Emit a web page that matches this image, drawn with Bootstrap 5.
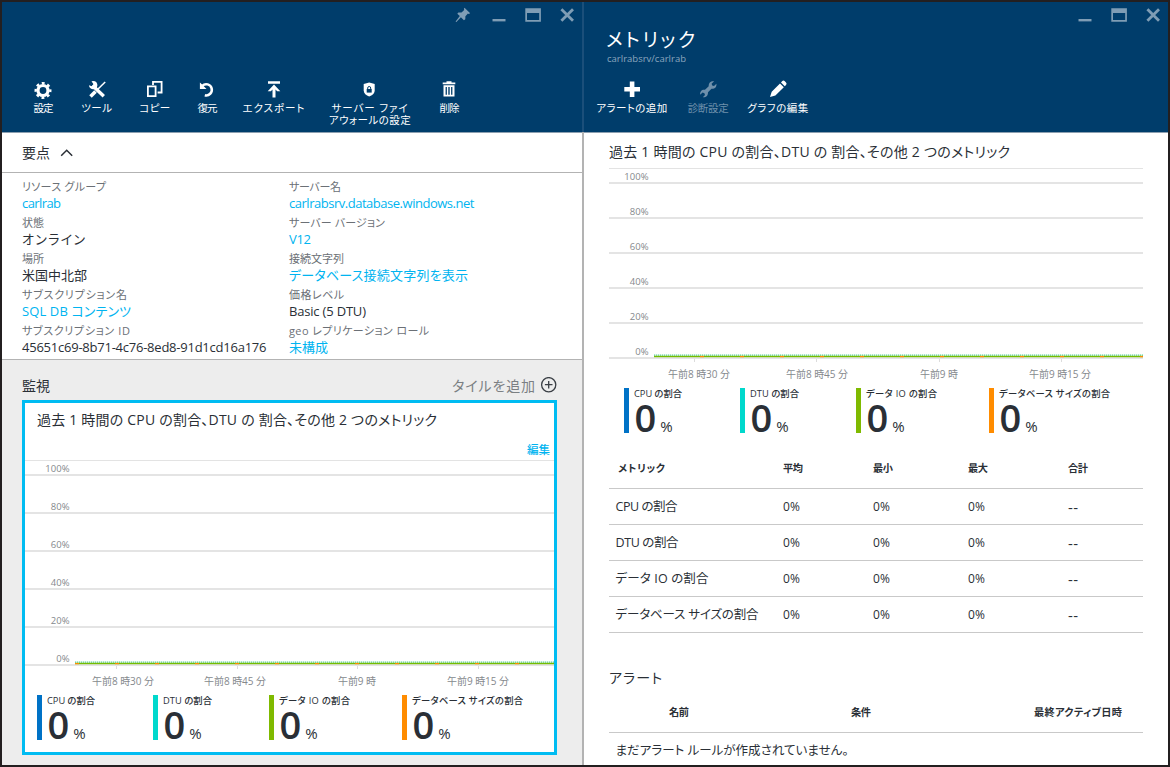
<!DOCTYPE html>
<html lang="ja">
<head>
<meta charset="utf-8">
<title>メトリック</title>
<meta name="viewport" content="width=device-width, initial-scale=1">
<link href="https://cdn.jsdelivr.net/npm/bootstrap@5.3.0/dist/css/bootstrap.min.css" rel="stylesheet">
<style>
  body { font-family: "Open Sans", "Noto Sans CJK JP", sans-serif; font-feature-settings: "palt"; color: #2a2f36; font-size: 12px; background: #231f20; }
  .portal { width: 1170px; height: 767px; border: 2px solid #231f20; background: #fff; }
  .blade-left { width: 580px; }
  .blade-right { width: 584px; }
  .divider { width: 2px; background: linear-gradient(#1b4f7a 130px, #b3b3b3 130px); }
  .blade-head { height: 131px; background: #003d6b; border-bottom: 1px solid #8c9fb0; color: #fff; }
  .controls { height: 26px; color: #7f9db5; padding-right: 7px; }
  .ctl-max { margin-left: 14px; }
  .tools { display: grid; font-size: 10.5px; line-height: 12px; }
  .tools-l { grid-template-columns: 56px 52px 64px 40px 94px 98px 60px; margin-left: 13px; margin-top: 51px; }
  .tools-r { grid-template-columns: 84px 68px 72px; margin-left: 6px; margin-top: 13px; }
  .tool svg { display: block; width: 20px; height: 20px; margin: 0 auto 3px; }
  .off { color: #6f90ab; }
  .blade-name { font-size: 19px; line-height: 24px; padding-left: 22px; }
  .blade-sub { font-size: 9.5px; line-height: 14px; padding-left: 23px; color: #8ba7bf; }
  .ess-head { height: 40px; border-bottom: 1px solid #b3b3b3; padding-left: 20px; font-size: 14px; }
  .ess-body { height: 187px; border-bottom: 1px solid #b3b3b3; padding: 6px 0 0 20px; }
  .ess-col { width: 267px; margin: 0; }
  .ess-col > div { height: 36px; }
  .ess-col dt { font-weight: 400; font-size: 11px; line-height: 16px; color: #6b7076; }
  .ess-col dd { font-size: 13px; line-height: 16px; margin: 0; }
  .azure { color: #00b4f0; }
  .monitor { background: #ededed; padding: 0 25px 0 20px; height: 405px; }
  .monitor-head { height: 40px; padding-top: 11px; font-size: 14px; }
  .add-tile { color: #7b7f83; }
  .tile { height: 355px; border: 3px solid #00bcf2; background: #fff; }
  .tile-title { padding: 8px 0 0 12px; font-size: 14px; line-height: 18px; }
  .tile-edit { font-size: 11.5px; line-height: 14px; margin: 14px 4px 3px 0; font-weight: 500; }
  .chart { display: block; }
  .chart text { fill: #85898d; }
  .legend-row { padding-left: 12px; }
  .tile .legend-row { padding-top: 1px; }
  .legend-wide { padding-left: 15px; }
  .item { height: 45px; border-left: 5px solid; padding-left: 5px; }
  .item-w { width: 116px; } .item-x { width: 133px; }
  .c1 { border-color: #0072c6; } .c2 { border-color: #00d8cc; } .c3 { border-color: #7fba00; } .c4 { border-color: #ff8c00; }
  .item-label { font-size: 9.3px; line-height: 12px; font-weight: 500; }
  .item-num { font-size: 38px; line-height: 34px; font-weight: 600; margin-left: .5px; }
  .item-pct { font-size: 15px; line-height: 15px; margin-left: 4px; }
  .metrics { padding: 0 25px; }
  .metrics-title { font-size: 14px; line-height: 20px; padding-top: 9px; height: 35px; }
  .grid { table-layout: fixed; font-size: 12px; margin: 0; --bs-table-color: #2a2f36; }
  .grid th, .grid td { padding: 0; border-bottom: 1px solid #c9c9c9; vertical-align: middle; height: 36px; line-height: 16px; }
  .grid th { font-size: 10.2px; font-weight: 700; height: 41px; }
  .grid-metrics { margin-top: 15px; }
  .grid-metrics th { height: 40px; }
  .grid-metrics td { padding-top: 2px; }
  .grid-metrics th:first-child { padding-left: 9px; }
  .grid-alerts th:first-child { padding-left: 60px; }
  .grid td:first-child { padding-left: 6.5px; font-size: 12.5px; }
  .grid-metrics td:last-child { font-size: 15px; }
  .alerts-title { font-size: 14px; line-height: 20px; margin-top: 35px; margin-bottom: 4px; }
</style>
</head>
<body>
<svg width="0" height="0" class="position-absolute" aria-hidden="true">
  <symbol id="i-min" viewBox="0 0 16 16"><path d="M1.500 12h13v2.400h-13z" fill="currentColor"/></symbol>
  <symbol id="i-max" viewBox="0 0 16 16"><path fill-rule="evenodd" d="M.3 1.300h15.600v13.400H.3zM2 6v7h12.200V6z" fill="currentColor"/></symbol>
  <symbol id="i-close" viewBox="0 0 16 16"><path d="M2.400 2.200l11.600 11.600M14 2.200L2.400 13.800" stroke="currentColor" stroke-width="2.800"/></symbol>
</svg>

<div class="portal d-flex overflow-hidden text-nowrap">

  <section class="blade-left flex-shrink-0">
    <header class="blade-head">
      <div class="controls d-flex justify-content-end align-items-center">
        <svg width="16" height="16" viewBox="0 0 16 16" class="me-1"><path d="M9.500 .8L15.200 6.300L13.600 6.900L12.900 6.600L10.400 9.200L10.300 12.200L8.900 13.300L5.900 10.300L1.400 15L.6 14.800L1 14L4.800 9.100L2.300 6.700L3.400 5.500L6.500 5.500L9.200 3L8.900 1.800z" fill="currentColor"/></svg>
        <svg width="16" height="16" class="ms-3 me-1"><use href="#i-min"/></svg>
        <svg width="16" height="16" class="ctl-max"><use href="#i-max"/></svg>
        <svg width="18" height="16" viewBox="-2 0 18 16" class="ms-3"><use href="#i-close" width="16" height="16"/></svg>
      </div>
      <div class="tools tools-l text-center">
        <div class="tool"><svg viewBox="0 0 20 20"><g fill="none" stroke="#fff"><circle cx="10" cy="11.500" r="5" stroke-width="3.200"/><circle cx="10" cy="11.500" r="7.300" stroke-width="2.400" stroke-dasharray="2.900 2.833" stroke-dashoffset="1.450"/></g></svg><span data-w="20">設定</span></div>
        <div class="tool"><svg viewBox="0 0 20 20"><g stroke="#fff" fill="none"><path d="M5.500 6.500L16.800 17.300" stroke-width="3.400"/><path d="M18.200 3L9 12" stroke-width="1.500"/><path d="M8.500 12.500L3.500 17.500" stroke-width="3.600"/></g><path d="M4.500 2.300A4.200 4.200 0 1 1 2 6.200L4.700 7.200L6.500 5.300z" fill="#fff"/></svg><span data-w="31">ツール</span></div>
        <div class="tool"><svg viewBox="0 0 20 20"><g fill="none" stroke="#fff" stroke-width="1.800"><path d="M2.900 7.400h7.700v9.700H2.900z"/><path d="M8 6V2.900h8.600v10.600h-4"/></g></svg><span data-w="31">コピー</span></div>
        <div class="tool"><svg viewBox="0 0 20 20"><path d="M5.300 6.800A5.600 5.600 0 1 1 7.800 16.200" fill="none" stroke="#fff" stroke-width="2.500"/><path d="M2.900 3.600V9.900H9.500L7.300 7.800L5.100 5.600z" fill="#fff"/></svg><span data-w="20">復元</span></div>
        <div class="tool"><svg viewBox="0 0 20 20"><path d="M4 2.300h12v2.500H4zM10 5.600L16.300 12.300H13.200L11.500 10.500V18.500H8.500V10.500L6.800 12.300H3.700z" fill="#fff"/></svg><span data-w="62">エクスポート</span></div>
        <div class="tool"><svg viewBox="0 0 20 20"><path d="M9.200 3.400L14.700 5V11.500C14.700 14.500 12 16.500 9.200 17.500C6.200 16.500 3.700 14.500 3.700 11.500V5z" fill="#fff"/><path d="M6.700 10h5v3.600h-5z" fill="#003d6b"/><path d="M7.700 10.300V9a1.500 1.500 0 0 1 3 0V10.300" fill="none" stroke="#003d6b"/></svg><span data-w="76">サーバー ファイ</span><br><span data-w="82">アウォールの設定</span></div>
        <div class="tool"><svg viewBox="0 0 20 20"><path fill-rule="evenodd" d="M7.500 2.300h5v1.200h3.800v1.700H3.700V3.500h3.800zM4.500 6.300h11V17.500h-11zM6.600 8v7.800h1.300V8zM9.300 8v7.800h1.400V8zM12.100 8v7.800h1.300V8z" fill="#fff"/></svg><span data-w="20">削除</span></div>
      </div>
    </header>

    <div class="ess-head d-flex align-items-center"><span data-w="28">要点</span>
      <svg class="ms-2" width="16" height="12" viewBox="0 0 16 12"><path d="M3.200 8.700L8.700 3.300L14.200 8.700" fill="none" stroke="#2a2f36" stroke-width="1.500"/></svg>
    </div>
    <div class="ess-body d-flex">
      <dl class="ess-col">
        <div><dt><span data-w="84">リソース グループ</span></dt><dd class="azure"><span data-w="39">carlrab</span></dd></div>
        <div><dt><span data-w="22">状態</span></dt><dd><span data-w="63">オンライン</span></dd></div>
        <div><dt><span data-w="22">場所</span></dt><dd><span data-w="65">米国中北部</span></dd></div>
        <div><dt><span data-w="105">サブスクリプション名</span></dt><dd class="azure"><span data-w="109">SQL DB コンテンツ</span></dd></div>
        <div><dt><span data-w="108">サブスクリプション ID</span></dt><dd><span data-w="244.5">45651c69-8b71-4c76-8ed8-91d1cd16a176</span></dd></div>
      </dl>
      <dl class="ess-col">
        <div><dt><span data-w="52">サーバー名</span></dt><dd class="azure"><span data-w="185.5">carlrabsrv.database.windows.net</span></dd></div>
        <div><dt><span data-w="96">サーバー バージョン</span></dt><dd class="azure"><span data-w="22">V12</span></dd></div>
        <div><dt><span data-w="55">接続文字列</span></dt><dd class="azure"><span data-w="179">データベース接続文字列を表示</span></dd></div>
        <div><dt><span data-w="55">価格レベル</span></dt><dd><span data-w="77">Basic (5 DTU)</span></dd></div>
        <div><dt><span data-w="140">geo レプリケーション ロール</span></dt><dd class="azure"><span data-w="39">未構成</span></dd></div>
      </dl>
    </div>

    <div class="monitor">
      <div class="monitor-head d-flex align-items-center justify-content-between">
        <span data-w="28">監視</span>
        <span class="add-tile d-flex align-items-center"><span data-w="83">タイルを追加</span>
          <svg class="ms-1" width="17" height="17" viewBox="0 0 17 17"><g fill="none" stroke="#3a3f45" stroke-width="1.300"><circle cx="8.700" cy="7.700" r="7.100"/><path d="M8.700 3.900v7.600M4.900 7.700h7.600"/></g></svg></span>
      </div>
      <div class="tile">
        <div class="tile-title"><span data-w="400">過去 1 時間の CPU の割合、DTU の 割合、その他 2 つのメトリック</span></div>
        <div class="tile-edit azure text-end"><span data-w="23">編集</span></div>
        <svg class="chart" id="chartA" width="529" height="234"></svg>
        <div class="legend-row d-flex">
          <div class="item item-w c1"><div class="item-label"><span data-w="48">CPU の割合</span></div><div class="d-flex align-items-baseline"><span class="item-num">0</span><span class="item-pct">%</span></div></div>
          <div class="item item-w c2"><div class="item-label"><span data-w="49">DTU の割合</span></div><div class="d-flex align-items-baseline"><span class="item-num">0</span><span class="item-pct">%</span></div></div>
          <div class="item item-x c3"><div class="item-label"><span data-w="71">データ IO の割合</span></div><div class="d-flex align-items-baseline"><span class="item-num">0</span><span class="item-pct">%</span></div></div>
          <div class="item item-x c4"><div class="item-label"><span data-w="111">データベース サイズの割合</span></div><div class="d-flex align-items-baseline"><span class="item-num">0</span><span class="item-pct">%</span></div></div>
        </div>
      </div>
    </div>
  </section>

  <div class="divider flex-shrink-0"></div>

  <section class="blade-right flex-shrink-0">
    <header class="blade-head">
      <div class="controls d-flex justify-content-end align-items-center">
        <svg width="16" height="16" class="me-1"><use href="#i-min"/></svg>
        <svg width="16" height="16" class="ctl-max"><use href="#i-max"/></svg>
        <svg width="18" height="16" viewBox="-2 0 18 16" class="ms-3"><use href="#i-close" width="16" height="16"/></svg>
      </div>
      <div class="blade-name"><span data-w="89">メトリック</span></div>
      <div class="blade-sub"><span data-w="79">carlrabsrv/carlrab</span></div>
      <div class="tools tools-r text-center">
        <div class="tool"><svg viewBox="0 0 20 20"><path d="M7.800 2.500h4.600v5.500h5.600v4.400h-5.600V18H7.800v-5.600H2.300V8h5.500z" fill="#fff"/></svg><span data-w="71">アラートの追加</span></div>
        <div class="tool off"><svg viewBox="0 0 20 20"><path d="M16.200 2.200L13.600 4.700L14.200 6.500L16 7L18.400 4.800C18.800 8 17 10 13.500 9.800L10 13.300C10.200 16.500 8.200 18.600 4.800 18.300L7 16L6.400 14.200L4.600 13.600L2.200 15.800C1.700 12.500 3.800 10.300 7 10.800L10.700 7.200C10.500 3.800 12.800 1.800 16.200 2.200z" fill="currentColor"/></svg><span data-w="41">診断設定</span></div>
        <div class="tool"><svg viewBox="0 0 20 20"><path d="M2 18L3.700 12.700L12 4.400L15.800 8.200L7.400 16.500zM13 3.400L14.300 2.100Q15.500 1 16.800 2.200L18 3.400Q19.200 4.800 18 6L16.800 7.200z" fill="#fff"/></svg><span data-w="61">グラフの編集</span></div>
      </div>
    </header>
    <div class="metrics">
      <div class="metrics-title"><span data-w="401">過去 1 時間の CPU の割合、DTU の 割合、その他 2 つのメトリック</span></div>
      <svg class="chart" id="chartB" width="534" height="220"></svg>
      <div class="legend-row legend-wide d-flex">
        <div class="item item-w c1"><div class="item-label"><span data-w="48">CPU の割合</span></div><div class="d-flex align-items-baseline"><span class="item-num">0</span><span class="item-pct">%</span></div></div>
        <div class="item item-w c2"><div class="item-label"><span data-w="49">DTU の割合</span></div><div class="d-flex align-items-baseline"><span class="item-num">0</span><span class="item-pct">%</span></div></div>
        <div class="item item-x c3"><div class="item-label"><span data-w="71">データ IO の割合</span></div><div class="d-flex align-items-baseline"><span class="item-num">0</span><span class="item-pct">%</span></div></div>
        <div class="item item-x c4"><div class="item-label"><span data-w="111">データベース サイズの割合</span></div><div class="d-flex align-items-baseline"><span class="item-num">0</span><span class="item-pct">%</span></div></div>
      </div>
      <table class="table grid grid-metrics">
        <colgroup><col style="width:174px"><col style="width:90px"><col style="width:95px"><col style="width:100px"><col></colgroup>
        <thead><tr><th><span data-w="47">メトリック</span></th><th><span data-w="20">平均</span></th><th><span data-w="20">最小</span></th><th><span data-w="20">最大</span></th><th><span data-w="20">合計</span></th></tr></thead>
        <tbody>
          <tr><td><span data-w="62">CPU の割合</span></td><td><span data-w="17">0%</span></td><td><span data-w="17">0%</span></td><td><span data-w="17">0%</span></td><td><span data-w="10">--</span></td></tr>
          <tr><td><span data-w="63">DTU の割合</span></td><td><span data-w="17">0%</span></td><td><span data-w="17">0%</span></td><td><span data-w="17">0%</span></td><td><span data-w="10">--</span></td></tr>
          <tr><td><span data-w="93">データ IO の割合</span></td><td><span data-w="17">0%</span></td><td><span data-w="17">0%</span></td><td><span data-w="17">0%</span></td><td><span data-w="10">--</span></td></tr>
          <tr><td><span data-w="143">データベース サイズの割合</span></td><td><span data-w="17">0%</span></td><td><span data-w="17">0%</span></td><td><span data-w="17">0%</span></td><td><span data-w="10">--</span></td></tr>
        </tbody>
      </table>
      <div class="alerts-title"><span data-w="53">アラート</span></div>
      <table class="table grid grid-alerts">
        <colgroup><col style="width:242px"><col style="width:183px"><col></colgroup>
        <thead><tr><th><span data-w="20">名前</span></th><th><span data-w="20">条件</span></th><th><span data-w="88">最終アクティブ日時</span></th></tr></thead>
        <tbody><tr><td colspan="3"><span data-w="233">まだアラート ルールが作成されていません。</span></td></tr></tbody>
      </table>
    </div>
  </section>
</div>

<script src="https://cdn.jsdelivr.net/npm/bootstrap@5.3.0/dist/js/bootstrap.bundle.min.js"></script>
<script>
  document.querySelectorAll('[data-w]').forEach(function (el) {
    var n = Array.from(el.textContent).length;
    var natural = el.getBoundingClientRect().width;
    el.style.letterSpacing = ((+el.dataset.w - natural) / Math.max(n - 1, 1)).toFixed(3) + 'px';
  });

  // Usage chart: grid, flat series at 0 and time axis.
  function drawChart(id, o) {
    var s = '<rect width="' + o.w + '" height="1" fill="#e3e3e3"/>';
    for (var i = 0; i < 6; i++) {
      var y = 14 + i * o.step;
      s += '<rect y="' + y + '" width="' + o.w + '" height="2" fill="#e4e4e4"/>' +
           '<text x="' + o.labelX + '" y="' + (y - 1.8) + '" font-size="9.5" text-anchor="end">' + (100 - i * 20) + '%</text>';
    }
    var base = 14 + 5 * o.step;
    s += '<path d="M' + o.start + ' ' + (base - 1.9) + 'H' + o.w + '" stroke="#56cf9a" stroke-width="1.200" stroke-dasharray="1.300 .7"/>';
    s += '<rect x="' + o.start + '" y="' + (base - 1.2) + '" width="' + (o.w - o.start) + '" height="1.400" fill="#76bc00"/>';
    for (var x = o.mark; x < o.w; x += 40) s += '<rect x="' + x + '" y="' + (base - 1) + '" width="' + Math.min(4, o.w - x) + '" height="1.200" fill="#ff8c00"/>';
    o.ticks.forEach(function (t) { s += '<rect x="' + t + '" y="' + (base + 2) + '" width="1" height="3" fill="#dcdcdc"/>'; });
    o.times.forEach(function (t) {
      s += '<text x="' + t[0] + '" y="' + (base + 20.8) + '" font-size="10" textLength="' + t[1] + '">' + t[2] + '</text>';
    });
    document.getElementById(id).innerHTML = s;
  }
  drawChart('chartA', { w: 529, step: 38, labelX: 44.5, start: 50, mark: 50, ticks: [91, 212, 332, 453],
    times: [[67, 62, '午前8 時30 分'], [179, 62, '午前8 時45 分'], [313, 38, '午前9 時'], [422, 62, '午前9 時15 分']] });
  drawChart('chartB', { w: 534, step: 35, labelX: 39.5, start: 45, mark: 91, ticks: [85, 207, 330, 452],
    times: [[59, 62, '午前8 時30 分'], [177, 62, '午前8 時45 分'], [311, 38, '午前9 時'], [420, 62, '午前9 時15 分']] });
</script>
</body>
</html>
